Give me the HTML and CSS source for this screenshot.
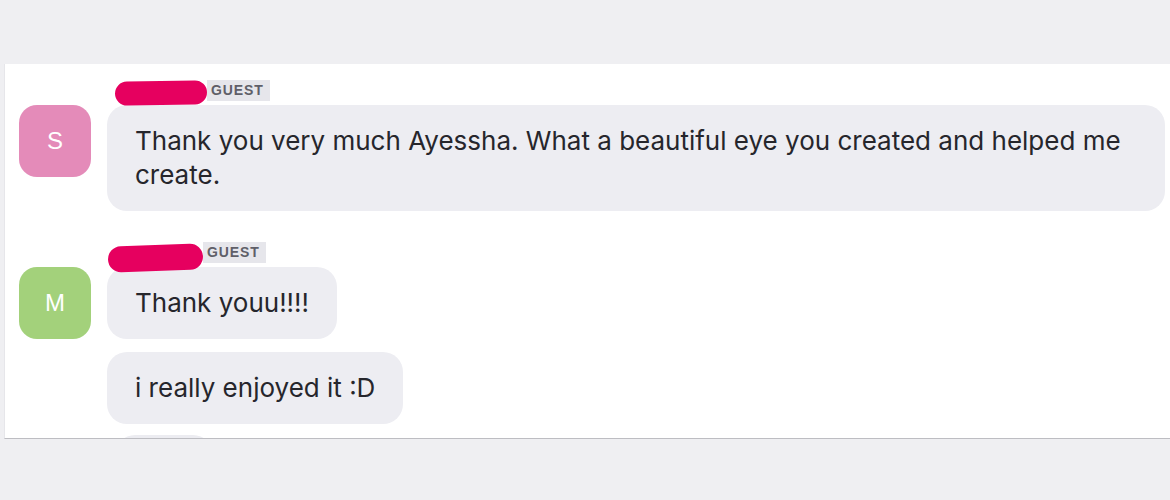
FILE: index.html
```html
<!DOCTYPE html>
<html>
<head>
<meta charset="utf-8">
<link rel="stylesheet" href="styles.css">
</head>
<body>
<div class="top-band"></div>
<main class="panel">
  <section class="group">
    <div class="avatar avatar-pink">S</div>
    <div class="content">
      <div class="header">
        <span class="redact redact-1"></span>
        <span class="badge">GUEST</span>
      </div>
      <div class="bubble">Thank you very much Ayessha. What a beautiful eye you created and helped me create.</div>
    </div>
  </section>
  <section class="group group-2">
    <div class="avatar avatar-green">M</div>
    <div class="content">
      <div class="header">
        <span class="redact redact-2"></span>
        <span class="badge">GUEST</span>
      </div>
      <div class="bubble">Thank youu!!!!</div>
      <div class="bubble">i really enjoyed it :D</div>
      <div class="bubble bubble-ghost">&nbsp;</div>
    </div>
  </section>
</main>
<div class="bottom-band"></div>
</body>
</html>
```
FILE: styles.css
```css
html, body {
  margin: 0;
  padding: 0;
}
body {
  background: #efeff2;
  font-family: Inter, "Liberation Sans", Arial, sans-serif;
  width: 1170px;
  height: 500px;
  overflow: hidden;
}
.top-band {
  height: 64px;
}
.panel {
  margin-left: 4px;
  background: #ffffff;
  border-left: 1px solid #e6e6ea;
  border-bottom: 1px solid #bdbdc2;
  overflow: hidden;
  padding: 16px 5px 0 14px;
  box-sizing: border-box;
  height: 375px;
}
.group {
  display: grid;
  grid-template-columns: 72px 1fr;
  column-gap: 16px;
}
.group-2 {
  margin-top: 31px;
}
.avatar {
  grid-column: 1;
  margin-top: 25px;
  width: 72px;
  height: 72px;
  border-radius: 18px;
  color: #fff;
  font-family: "Liberation Sans", Arial, sans-serif;
  font-size: 24px;
  display: flex;
  align-items: center;
  justify-content: center;
  align-self: start;
}
.avatar-pink { background: #e48bb9; }
.avatar-green { background: #a3d17b; }
.content {
  grid-column: 2;
  display: flex;
  flex-direction: column;
  align-items: flex-start;
  gap: 13px;
  min-width: 0;
}
.header {
  display: flex;
  align-items: flex-start;
  height: 25px;
  margin-bottom: -13px;
}
.redact {
  display: block;
  background: #e6005f;
  border-radius: 14px;
}
.redact-1 {
  width: 92px;
  height: 24px;
  margin-left: 8px;
  margin-top: 1px;
  transform: rotate(-1deg);
}
.redact-2 {
  width: 95px;
  height: 26px;
  margin-left: 1px;
  margin-top: 3px;
  transform: rotate(-2deg);
}
.badge {
  background: #e6e6eb;
  color: #5f5f68;
  font-family: "Liberation Sans", Arial, sans-serif;
  font-weight: bold;
  font-size: 14px;
  letter-spacing: 0.9px;
  line-height: 21px;
  padding: 0 6px 0 4px;
}
.bubble {
  background: #ededf2;
  color: #26262c;
  font-size: 26px;
  line-height: 34px;
  padding: 19px 28px;
  border-radius: 20px;
  max-width: 100%;
  box-sizing: border-box;
}
.bubble-ghost {
  width: 98px;
  margin-top: -2px;
  margin-left: 8px;
  background: #ececf1;
}
.bottom-band {
  height: 61px;
}
```
